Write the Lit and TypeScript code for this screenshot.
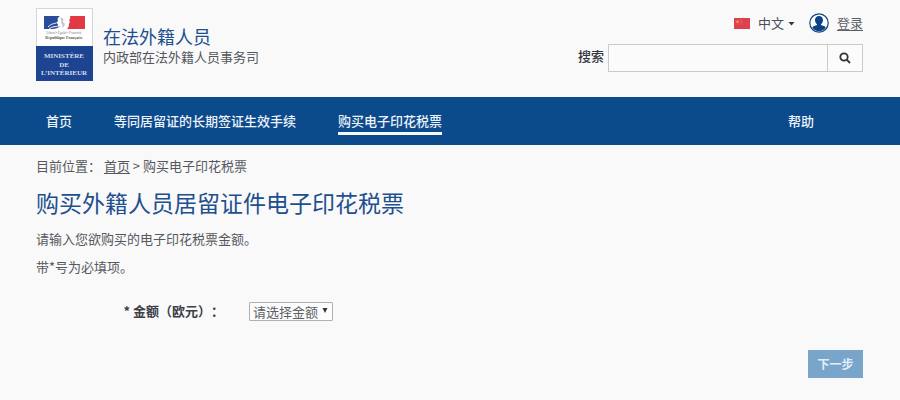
import { LitElement, html, css, svg } from "lit";
import { customElement } from "lit/decorators.js";

@customElement("ministry-logo")
class MinistryLogo extends LitElement {
  static styles = css`
    :host { display: block; width: 57px; height: 73px; }
    svg { display: block; }
    .serif { font-family: "Liberation Serif", serif; text-anchor: middle; }
    .name { font-size: 7px; font-weight: 700; fill: #d5deef; }
    .tiny { font-size: 4px; font-weight: 700; fill: #555; }
    .motto { font-size: 3px; font-style: italic; fill: #777; }
  `;
  render() {
    return html`<svg width="57" height="73" viewBox="0 0 57 73" role="img" aria-label="Ministère de l'Intérieur">
      ${svg`
      <rect x="0.5" y="0.5" width="56" height="72" fill="#fff" stroke="#d4d6da"/>
      <rect y="38" width="57" height="35" fill="#1c4490"/>
      <path d="M8 8H24C22 9 21 11 22 13L20 15L22 16C21 18 23 19 25 18C22 20 19 21 17 21H8Z" fill="#2a4c9c"/>
      <path d="M12 19C16 15 18 16 20 15M13 21C17 18 19 19 23 18" stroke="#fff" stroke-width="1" fill="none"/>
      <path d="M24 10C27 9 28 11 27 14C30 16 29 18 26 20C27 17 26 16 25 15C26 13 25 11 24 10Z" fill="#c3c6d2"/>
      <path d="M34 8H49V21H31C34 18 32 16 34 14C32 12 35 11 34 8Z" fill="#e23a45"/>
      <text class="serif motto" x="28" y="26">Liberté • Égalité • Fraternité</text>
      <text class="serif tiny" x="28" y="31">République Française</text>
      <text class="serif name" x="28" y="50">MINISTÈRE</text>
      <text class="serif name" x="28" y="59">DE</text>
      <text class="serif name" x="28" y="67">L’INTÉRIEUR</text>`}
    </svg>`;
  }
}

@customElement("site-header")
class SiteHeader extends LitElement {
  static styles = css`
    :host { display: block; padding: 8px 37px 0 36px; }
    .bar { display: flex; justify-content: space-between; height: 89px; }
    .brand { display: flex; gap: 10px; }
    .titles { padding-top: 16px; }
    .title { font-size: 18px; line-height: 24px; color: #1e4f8e; }
    .sub { font-size: 13px; line-height: 18px; color: #53565e; }
    .tools { display: flex; flex-direction: column; align-items: flex-end; gap: 8px; padding-top: 2px; }
    .user { display: flex; align-items: center; height: 26px; }
    .lang {
      display: flex; align-items: center; padding: 0; border: 0; background: none;
      font: inherit; font-size: 13px; line-height: 20px; color: #4a4e5a;
    }
    .lang svg { display: block; }
    .flag { margin-right: 8px; }
    .caret { margin: 2px 0 0 4px; }
    .avatar { margin: 0 8px 0 14px; }
    .login { font-size: 13px; line-height: 20px; color: #5b5f68; text-underline-offset: 2px; }
    .search { display: flex; align-items: center; }
    label { font-size: 13px; line-height: 20px; font-weight: 500; color: #33363f; margin: 0 4px 4px 0; }
    input {
      box-sizing: border-box; width: 220px; height: 28px; padding: 0 8px; border: 1px solid #cacaca;
      border-radius: 0; background: #fbfbfb; font: inherit; font-size: 13px;
    }
    .go {
      box-sizing: border-box; width: 35px; height: 28px; padding: 0; border: 1px solid #cacaca;
      border-left: 0; background: #fbfbfb; display: grid; place-items: center;
    }
  `;
  render() {
    return html`<header class="bar">
      <div class="brand">
        <ministry-logo></ministry-logo>
        <div class="titles">
          <div class="title">在法外籍人员</div>
          <div class="sub">内政部在法外籍人员事务司</div>
        </div>
      </div>
      <div class="tools">
        <div class="user">
          <button class="lang">
            <svg class="flag" width="16" height="11" viewBox="0 0 16 11">
              <rect width="16" height="11" fill="#dd4150"/>
              <path d="M3.5 1.5l.6 1.5h1.6l-1.3 1 .5 1.6-1.4-1-1.4 1 .5-1.6-1.3-1h1.6z" fill="#f39a4a"/>
              <path d="M6.5 1.5h1v1h-1zM7.5 3.5h1v1h-1zM6.5 5.5h1v1h-1z" fill="#ee8a4a"/>
            </svg>中文<svg class="caret" width="7" height="4" viewBox="0 0 7 4"><path d="M0.500 0h6L3.500 3.500z" fill="#333845"/></svg>
          </button>
          <svg class="avatar" width="20" height="20" viewBox="0 0 20 20">
            <circle cx="10" cy="10" r="9.2" fill="#fff" stroke="#0f4382" stroke-width="1.2"/>
            <path d="M10 3C12.6 3 14 4.700 14 7C14 8.800 13.200 10.300 12 11.200V12L15.500 13.200C16.300 13.600 16.600 14.200 16.600 14.700A8 8 0 0 1 3.400 14.700C3.400 14.200 3.700 13.600 4.500 13.200L8 12V11.200C6.800 10.300 6 8.800 6 7C6 4.700 7.400 3 10 3Z" fill="#0b4389"/>
          </svg>
          <a class="login" href="#">登录</a>
        </div>
        <form class="search">
          <label for="q">搜索</label>
          <input id="q" type="text" />
          <button class="go" type="button" aria-label="搜索">
            <svg width="12" height="12" viewBox="0 0 12 12" fill="none" stroke="#333" stroke-width="1.8">
              <circle cx="5" cy="5" r="3.700"/><path d="M7.700 7.700L11 11"/>
            </svg>
          </button>
        </form>
      </div>
    </header>`;
  }
}

@customElement("main-nav")
class MainNav extends LitElement {
  static styles = css`
    :host { display: block; background: #0b4a8b; }
    nav { display: flex; gap: 42px; padding: 13px 86px 10px 46px; }
    a {
      font-size: 13px; line-height: 22px; font-weight: 500; color: #edf3fa; text-decoration: none;
      border-bottom: 3px solid transparent;
    }
    .current { border-color: #f6f8fb; }
    .help { margin-left: auto; }
  `;
  render() {
    return html`<nav>
      <a href="#">首页</a>
      <a href="#">等同居留证的长期签证生效手续</a>
      <a class="current" href="#" aria-current="page">购买电子印花税票</a>
      <a class="help" href="#">帮助</a>
    </nav>`;
  }
}

@customElement("app-root")
class AppRoot extends LitElement {
  static styles = css`
    :host {
      display: block; min-height: 100vh; background: #f9f9f9; color: #55585f;
      font-family: "Noto Sans CJK SC", sans-serif; font-size: 13px; line-height: 20px;
    }
    main { padding: 11px 37px 20px 36px; }
    .crumbs a { color: inherit; text-underline-offset: 2px; }
    h1 { margin: 9px 0 10px; font-size: 23px; line-height: 34px; font-weight: 400; color: #1e4f8e; }
    p { margin: 0 0 8px; }
    .row { display: flex; align-items: center; margin-top: 24px; }
    .row label {
      width: 188px; text-align: right; font-weight: 700; color: #3c3f48; margin-right: 25px;
      text-spacing-trim: space-all;
    }
    .pick { display: grid; align-items: center; }
    select {
      grid-area: 1 / 1; appearance: none; box-sizing: border-box; width: 84px; height: 19px; margin: 0;
      padding: 0 0 0 3px; border: 1px solid #b0b0b0; border-radius: 1px; background: #fcfcfc;
      font: inherit; line-height: 17px; color: #5d6067;
    }
    .arrow { grid-area: 1 / 1; justify-self: end; margin-right: 5px; pointer-events: none; }
    .actions { display: flex; justify-content: flex-end; margin-top: 29px; }
    .next {
      width: 55px; height: 28px; padding: 0; border: 0; background: #79a5cb; color: #e3eef8;
      font: inherit; font-size: 12px; font-weight: 700;
    }
  `;
  render() {
    return html`<site-header></site-header>
      <main-nav></main-nav>
      <main>
        <div class="crumbs">目前位置： <a href="#">首页</a> &gt; 购买电子印花税票</div>
        <h1>购买外籍人员居留证件电子印花税票</h1>
        <p>请输入您欲购买的电子印花税票金额。</p>
        <p>带*号为必填项。</p>
        <div class="row">
          <label for="amount">* 金额（欧元）：</label>
          <div class="pick">
            <select id="amount"><option>请选择金额</option></select>
            <svg class="arrow" width="6" height="6" viewBox="0 0 6 6"><path d="M0.500 0h5L3 5z" fill="#333"/></svg>
          </div>
        </div>
        <div class="actions"><button class="next">下一步</button></div>
      </main>`;
  }
}
